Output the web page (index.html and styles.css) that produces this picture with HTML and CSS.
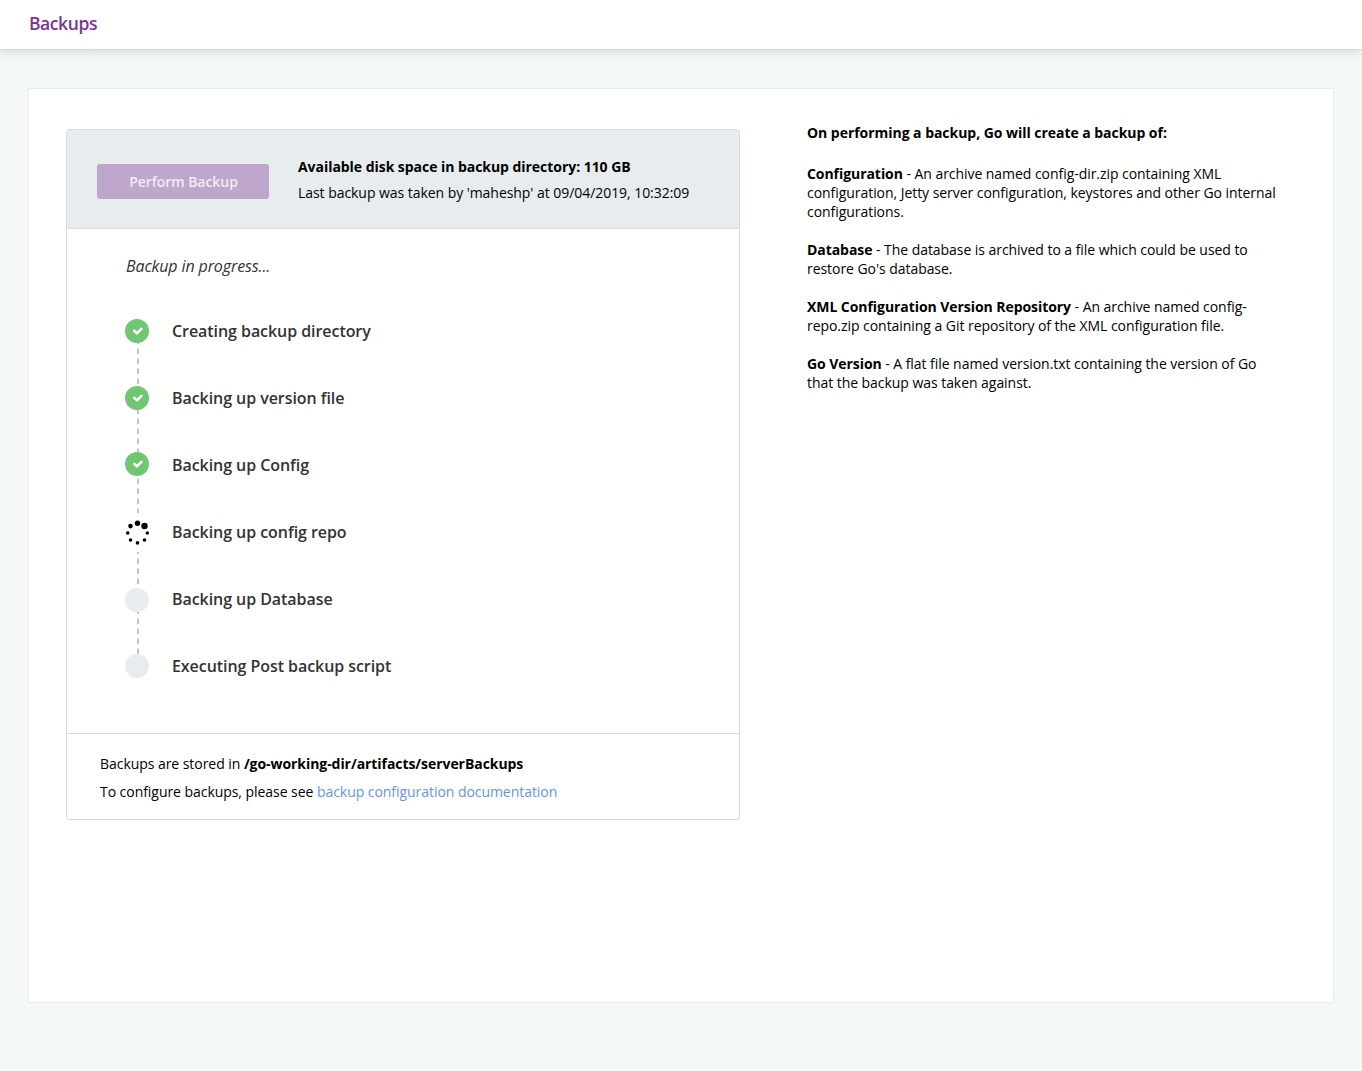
FILE: index.html
```html
<!DOCTYPE html>
<html lang="en">
<head>
<meta charset="utf-8">
<title>Backups</title>
<link rel="stylesheet" href="styles.css">
</head>
<body>
<header class="page-header"><h1>Backups</h1></header>
<main class="page">
  <section class="panel">
    <div class="panel-top">
      <button class="perform" disabled>Perform Backup</button>
      <div class="info">
        <p class="space">Available disk space in backup directory: 110 GB</p>
        <p class="last">Last backup was taken by 'maheshp' at 09/04/2019, 10:32:09</p>
      </div>
    </div>
    <div class="progress">
      <p class="status">Backup in progress...</p>
      <ul class="steps">
        <li class="step"><svg class="icon" viewBox="0 0 24 24"><circle class="done" cx="12" cy="12" r="12"/><path class="tick" d="M9.300 11.900l2.700 2.400 4.500-4.400"/></svg><span>Creating backup directory</span></li>
        <li class="step"><svg class="icon" viewBox="0 0 24 24"><circle class="done" cx="12" cy="12" r="12"/><path class="tick" d="M9.300 11.900l2.700 2.400 4.500-4.400"/></svg><span>Backing up version file</span></li>
        <li class="step"><svg class="icon raised" viewBox="0 0 24 24"><circle class="done" cx="12" cy="12" r="12"/><path class="tick" d="M9.300 11.900l2.700 2.400 4.500-4.400"/></svg><span>Backing up Config</span></li>
        <li class="step"><svg class="icon" viewBox="0 0 24 24"><rect class="clear" y="-7" width="24" height="39"/><circle cx="12.500" cy="3.200" r="2.700"/><circle cx="19.500" cy="6" r="3.200"/><circle cx="22.300" cy="13" r="1.750"/><circle cx="19.500" cy="20" r="1.800"/><circle cx="12.500" cy="22.800" r="1.850"/><circle cx="5.500" cy="20" r="1.800"/><circle cx="2.700" cy="13" r="1.800"/><circle cx="5.500" cy="6.100" r="2.300"/></svg><span>Backing up config repo</span></li>
        <li class="step"><svg class="icon lowered" viewBox="0 0 24 24"><circle class="todo" cx="12" cy="12" r="12"/></svg><span>Backing up Database</span></li>
        <li class="step"><svg class="icon" viewBox="0 0 24 24"><circle class="todo" cx="12" cy="12" r="12"/></svg><span>Executing Post backup script</span></li>
      </ul>
    </div>
    <div class="panel-bottom">
      <p>Backups are stored in <b>/go-working-dir/artifacts/serverBackups</b></p>
      <p>To configure backups, please see <a>backup configuration documentation</a></p>
    </div>
  </section>
  <section class="help">
    <h2>On performing a backup, Go will create a backup of:</h2>
    <p><b>Configuration</b> - An archive named config-dir.zip containing XML<br>configuration, Jetty server configuration, keystores and other Go internal<br>configurations.</p>
    <p><b>Database</b> - The database is archived to a file which could be used to<br>restore Go's database.</p>
    <p><b>XML Configuration Version Repository</b> - An archive named config-<br>repo.zip containing a Git repository of the XML configuration file.</p>
    <p><b>Go Version</b> - A flat file named version.txt containing the version of Go<br>that the backup was taken against.</p>
  </section>
</main>
</body>
</html>
```
FILE: styles.css
```css
* { box-sizing: border-box; }
body { margin: 0; min-height: 1071px; background: #f4f8f9; font-family: "Open Sans", sans-serif; font-size: 14px; letter-spacing: -0.05px; color: #000; }
h1, h2, p, ul { margin: 0; padding: 0; }
b { font-weight: 700; letter-spacing: -0.06px; }
.page-header { height: 50px; padding: 11px 29px; background: #fff; border-bottom: 1px solid #d6dadc; box-shadow: 0 2px 10px rgba(0, 0, 0, 0.12); }
.page-header h1 { font-size: 17.5px; line-height: 24px; font-weight: 600; letter-spacing: -0.42px; color: #783596; }
.page { display: flex; align-items: flex-start; margin: 38px 28px 0; height: 915px; padding: 0 37px; background: #fff; border: 1px solid #e7eef0; }
.panel { width: 674px; height: 691px; margin-top: 40px; border: 1px solid #d6dce0; border-radius: 3px; }
.panel-top { display: flex; height: 99px; padding: 24px 30px 0; background: #e7ecef; border-bottom: 1px solid #d6dce0; border-radius: 2px; }
.perform { width: 172px; height: 35px; margin-top: 10px; padding: 0 0 0 1px; border: 0; border-radius: 3px; background: #bea6cd; color: #f0edf4; font: 600 14px "Open Sans", sans-serif; letter-spacing: -0.04px; }
.info { margin-left: 29px; line-height: 26px; white-space: nowrap; }
.space { font-weight: 700; letter-spacing: -0.045px; }
.progress { height: 505px; padding: 25px 58px 0; color: #333; border-bottom: 1px solid #d6dce0; }
.status { font-size: 16px; font-style: italic; line-height: 24px; padding-left: 1px; letter-spacing: -0.12px; }
/* The dashed connector runs behind all the step icons. */
.steps { list-style: none; margin-top: 41px; background: repeating-linear-gradient(#c4c4c4 0 5px, transparent 5px 9px, #e4e4e4 9px 10px) 12px 0 / 2px 347px no-repeat; }
.step { display: flex; gap: 23px; height: 67px; font-size: 16px; font-weight: 600; line-height: 24px; letter-spacing: -0.06px; }
.icon { width: 24px; height: 24px; overflow: visible; }
.raised { margin-top: -1px; }
.lowered { margin-top: 1px; }
.done { fill: #71c671; }
.todo { fill: #e7ecef; }
.clear { fill: #fff; }
.tick { fill: none; stroke: #fff; stroke-width: 2.6; stroke-linecap: round; }
.panel-bottom { padding: 16px 33px 0; line-height: 28px; }
.panel-bottom a { color: #6695e2; }
.help { margin: 34px 0 0 67px; line-height: 19px; white-space: nowrap; }
.help h2 { font-size: 14px; line-height: 20px; font-weight: 700; letter-spacing: -0.04px; margin-bottom: 21px; }
.help p { margin-bottom: 19px; }
```
